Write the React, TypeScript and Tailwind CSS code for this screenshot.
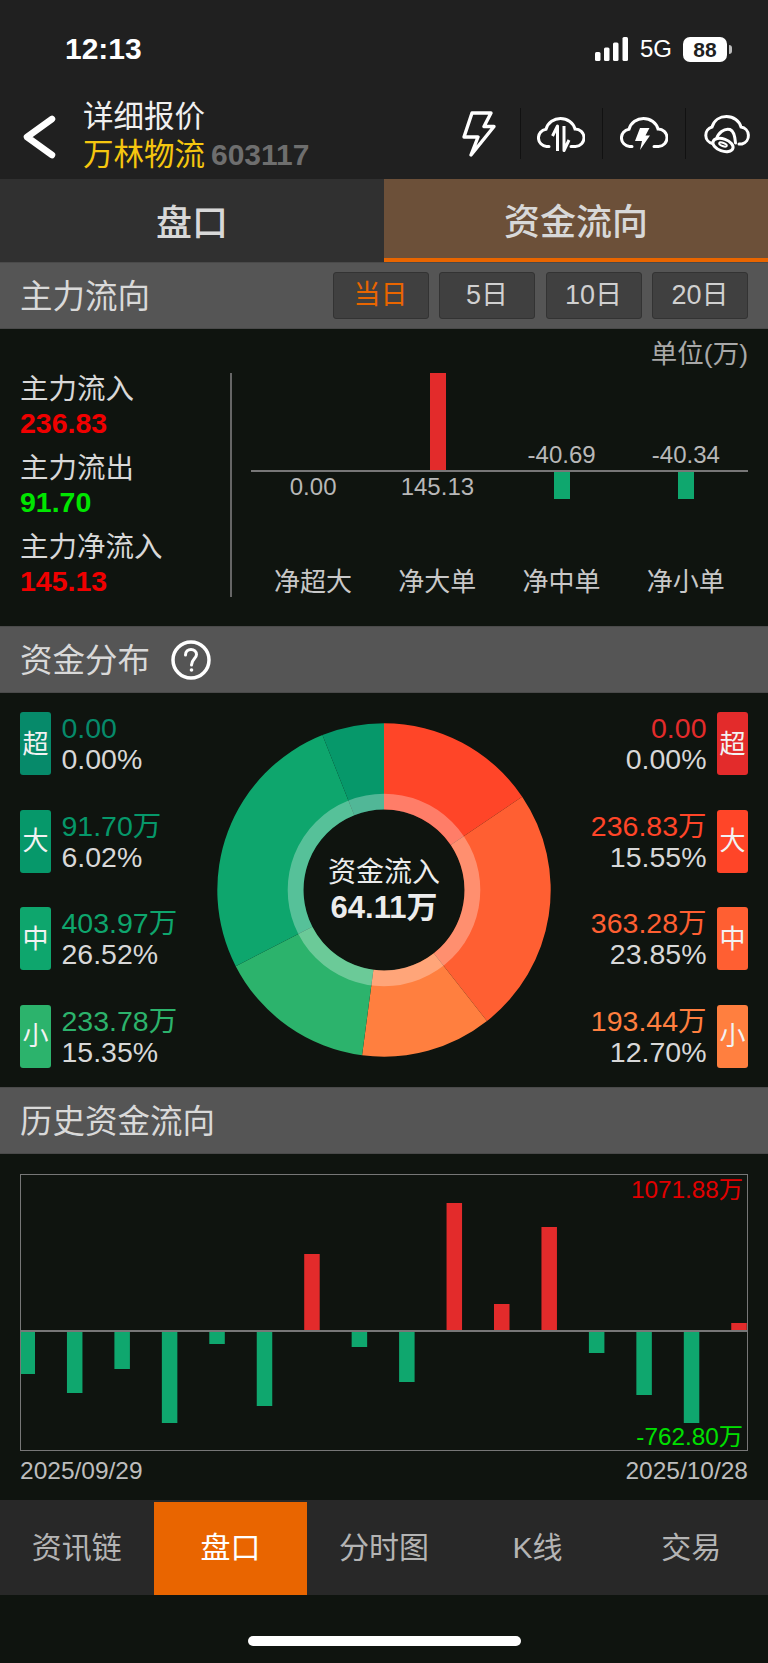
const FONT = "[font-family:'Liberation_Sans','Noto_Sans_CJK_SC',sans-serif]";

/* ── Status bar glyphs ── */
function SignalIcon() {
  return (
    <svg width="34" height="24" viewBox="0 0 34 24" fill="white">
      <rect x="0" y="15" width="5.5" height="9" rx="1.5" />
      <rect x="9" y="10.5" width="5.5" height="13.5" rx="1.5" />
      <rect x="18" y="5.5" width="5.5" height="18.5" rx="1.5" />
      <rect x="27.5" y="0" width="5.5" height="24" rx="1.5" />
    </svg>
  );
}

function StatusBar() {
  return (
    <div className="flex h-[92px] items-start justify-between pt-[30px] pl-[65px] pr-[36px]">
      <span className="text-[30px] leading-[38px] font-semibold text-white">12:13</span>
      <div className="flex items-center pt-[6px]">
        <SignalIcon />
        <span className="ml-[11px] text-[24px] leading-[26px] text-white">5G</span>
        <span className="ml-[11px] flex h-[25px] w-[44px] items-center justify-center rounded-[7px] bg-white text-[21px] leading-none font-bold text-[#202020]">
          88
        </span>
        <span className="ml-[2px] h-[9px] w-[3px] rounded-r-full bg-white/70" />
      </div>
    </div>
  );
}

/* ── Toolbar icons ── */
const CLOUD = "M12 29.5H9.5A8.7 8.7 0 0 1 9 12.2C11 5.5 17 1.5 23.5 1.5C30.5 1.5 36.5 6 38 12A8.7 8.7 0 0 1 38.5 29.5H34";

function BoltIcon() {
  return (
    <svg width="34" height="46" viewBox="0 0 34 46" fill="none" stroke="white" strokeWidth="3.4" strokeLinejoin="round">
      <path d="M10 2H29L22 15.5H32L9 44L16 26H2Z" />
    </svg>
  );
}

function CloudSwapIcon() {
  return (
    <svg className="mt-[3px]" width="48" height="36" viewBox="0 0 48 36" fill="none" stroke="white" strokeWidth="3">
      <path d={CLOUD} strokeLinecap="round" />
      <path d="M20.5 34V9L15.5 19" strokeLinejoin="round" />
      <path d="M27 9V33.5L32 23" strokeLinejoin="round" />
    </svg>
  );
}

function CloudBoltIcon() {
  return (
    <svg className="mt-[3px]" width="48" height="36" viewBox="0 0 48 36" fill="none" stroke="white" strokeWidth="3">
      <path d={CLOUD} strokeLinecap="round" />
      <path d="M20 11H29.5L25.5 18.5H30L20 33L22 24H15Z" fill="white" stroke="none" />
    </svg>
  );
}

function CloudBellIcon() {
  return (
    <svg className="mt-[5px]" width="48" height="42" viewBox="0 0 48 42" fill="none" stroke="white" strokeWidth="3">
      <path d="M9.5 28.5A8.5 8.5 0 0 1 9 12C11 5 17 1.5 23.5 1.5C30.5 1.5 36.5 6 38 12A8.7 8.7 0 0 1 39 29H36" strokeLinecap="round" />
      <path d="M13.5 24C15 18 21 13 27 14.5C31 16 32 21 32.5 28" fill="#202020" strokeLinecap="round" />
      <ellipse cx="20" cy="30" rx="10.5" ry="6" transform="rotate(20 20 30)" fill="#202020" />
      <ellipse cx="20" cy="29.5" rx="4" ry="1.6" transform="rotate(20 20 29.5)" strokeWidth="2" />
    </svg>
  );
}

function ToolSlot({ children, divider = true }: { children: React.ReactNode; divider?: boolean }) {
  return (
    <div className={`flex h-[51px] w-[82.5px] items-center justify-center ${divider ? "border-r border-[#111]" : ""}`}>
      {children}
    </div>
  );
}

function NavBar() {
  return (
    <div className="flex h-[87px] items-start">
      <svg className="mt-[22px] ml-[22px]" width="36" height="46" viewBox="0 0 36 46" fill="none" stroke="white" strokeWidth="6.5" strokeLinecap="round" strokeLinejoin="round">
        <path d="M30 5L5 23L30 41" />
      </svg>
      <div className="mt-[5px] ml-[25px] flex flex-col">
        <span className="text-[30.5px] leading-[38px] text-[#f0f0f0]">详细报价</span>
        <span className="text-[30.5px] leading-[38px] text-[#f5c60f]">
          万林物流
          <span className="ml-[6px] text-[30px] font-bold text-[#6e6e6e]">603117</span>
        </span>
      </div>
      <div className="mt-[16px] ml-auto flex items-center">
        <ToolSlot><BoltIcon /></ToolSlot>
        <ToolSlot><CloudSwapIcon /></ToolSlot>
        <ToolSlot><CloudBoltIcon /></ToolSlot>
        <ToolSlot divider={false}><CloudBellIcon /></ToolSlot>
      </div>
    </div>
  );
}

/* ── Section header strip ── */
function SectionHeader({ title, children }: { title: string; children?: React.ReactNode }) {
  return (
    <div className="flex h-[67px] shrink-0 items-center border-y border-[#4a4a4a] bg-[#555555] pl-[20px] pr-[20px]">
      <span className="pt-[3px] text-[32.5px] leading-none text-[#d9d9d9]">{title}</span>
      {children}
    </div>
  );
}

/* ── Main-force flow ── */
const RANGES = ["当日", "5日", "10日", "20日"];

const FLOW_TOTALS = [
  { label: "主力流入", value: "236.83", color: "text-[#f00000]" },
  { label: "主力流出", value: "91.70", color: "text-[#00e600]" },
  { label: "主力净流入", value: "145.13", color: "text-[#f00000]" },
];

const NET_ORDERS = [
  { label: "净超大", value: "0.00", bar: 0 },
  { label: "净大单", value: "145.13", bar: 97 },
  { label: "净中单", value: "-40.69", bar: -27 },
  { label: "净小单", value: "-40.34", bar: -27 },
];

function MainFlow() {
  return (
    <div className="h-[297px] shrink-0 pr-[20px]">
      <div className="h-[44px] pt-[8px] text-right text-[26.5px] leading-[34px] text-[#a8a8a8]">单位(万)</div>
      <div className="flex h-[224px]">
        <div className="flex w-[232px] flex-col gap-[12px] border-r-2 border-[#666] pl-[20px]">
          {FLOW_TOTALS.map((row) => (
            <div key={row.label} className="text-[28.5px] leading-[33.5px]">
              <div className="text-[#d8d8d8]">{row.label}</div>
              <div className={`font-bold ${row.color}`}>{row.value}</div>
            </div>
          ))}
        </div>
        <div className="ml-[19px] flex flex-1 flex-col">
          <div className="grid h-[97px] grid-cols-4">
            {NET_ORDERS.map((o) => (
              <div key={o.label} className="flex flex-col items-center justify-end">
                {o.bar > 0 && <div className="ml-[1px] w-[16px] bg-[#e32b2b]" style={{ height: o.bar }} />}
                {o.bar < 0 && <span className="text-[24px] leading-[30px] text-[#b8b8b8]">{o.value}</span>}
              </div>
            ))}
          </div>
          <div className="h-[2px] bg-[#777]" />
          <div className="grid flex-1 grid-cols-4">
            {NET_ORDERS.map((o) => (
              <div key={o.label} className="flex flex-col items-center">
                {o.bar < 0 ? (
                  <div className="w-[16px] bg-[#0fa76e]" style={{ height: -o.bar }} />
                ) : (
                  <span className="text-[24px] leading-[30px] text-[#b8b8b8]">{o.value}</span>
                )}
              </div>
            ))}
          </div>
          <div className="grid h-[34px] grid-cols-4 pt-[2px]">
            {NET_ORDERS.map((o) => (
              <div key={o.label} className="text-center text-[26px] leading-[34px] text-[#c8c8c8]">{o.label}</div>
            ))}
          </div>
        </div>
      </div>
    </div>
  );
}

/* ── Capital distribution ── */
const OUTFLOW = [
  { tag: "超", value: "0.00", pct: "0.00%", bg: "bg-[#068a6a]", fg: "text-[#068a6a]" },
  { tag: "大", value: "91.70万", pct: "6.02%", bg: "bg-[#06986a]", fg: "text-[#06986a]" },
  { tag: "中", value: "403.97万", pct: "26.52%", bg: "bg-[#0ea66d]", fg: "text-[#0ea66d]" },
  { tag: "小", value: "233.78万", pct: "15.35%", bg: "bg-[#2cb36c]", fg: "text-[#2cb36c]" },
];

const INFLOW = [
  { tag: "超", value: "0.00", pct: "0.00%", bg: "bg-[#e32b2b]", fg: "text-[#e32b2b]" },
  { tag: "大", value: "236.83万", pct: "15.55%", bg: "bg-[#ff4528]", fg: "text-[#ff4528]" },
  { tag: "中", value: "363.28万", pct: "23.85%", bg: "bg-[#ff5f32]", fg: "text-[#ff5f32]" },
  { tag: "小", value: "193.44万", pct: "12.70%", bg: "bg-[#ff7f3f]", fg: "text-[#ff7f3f]" },
];

// clockwise from twelve o'clock, in percent of the whole
const SLICES = [
  { pct: 15.55, fill: "#ff4528" },
  { pct: 23.85, fill: "#ff5f32" },
  { pct: 12.7, fill: "#ff7f3f" },
  { pct: 15.35, fill: "#2cb36c" },
  { pct: 26.53, fill: "#0ea66d" },
  { pct: 6.02, fill: "#06986a" },
];

function slicePath(from: number, to: number, r1: number, r0: number) {
  const pt = (pct: number, r: number) => {
    const a = (pct / 100) * 2 * Math.PI;
    return `${(167 + r * Math.sin(a)).toFixed(2)} ${(167 - r * Math.cos(a)).toFixed(2)}`;
  };
  const large = to - from > 50 ? 1 : 0;
  return `M${pt(from, r1)}A${r1} ${r1} 0 ${large} 1 ${pt(to, r1)}L${pt(to, r0)}A${r0} ${r0} 0 ${large} 0 ${pt(from, r0)}Z`;
}

function Donut() {
  let start = 0;
  return (
    <div className="relative h-[334px] w-[334px]">
      <svg width="334" height="334" viewBox="0 0 334 334">
        {SLICES.map((s) => {
          const d = slicePath(start, start + s.pct, 166.7, 80.5);
          start += s.pct;
          return <path key={s.fill} d={d} fill={s.fill} />;
        })}
        <circle cx="167" cy="167" r="88.4" fill="none" stroke="white" strokeOpacity="0.3" strokeWidth="15.8" />
      </svg>
      <div className="absolute inset-0 flex flex-col items-center justify-center text-[28px] leading-[35px] text-[#ececec]">
        <span>资金流入</span>
        <span className="text-[31px] font-bold">64.11万</span>
      </div>
    </div>
  );
}

type LegendRow = (typeof OUTFLOW)[number];

function Legend({ rows, side }: { rows: LegendRow[]; side: "left" | "right" }) {
  return (
    <div className="flex flex-col gap-[34.5px] pt-[19px]">
      {rows.map((r) => (
        <div key={r.tag} className={`flex h-[63px] gap-[10.5px] ${side === "right" ? "flex-row-reverse text-right" : ""}`}>
          <div className={`flex h-[63px] w-[31px] items-center justify-center rounded-[3px] text-[26px] leading-none text-[#f2f2f2] ${r.bg}`}>
            {r.tag}
          </div>
          <div className="pt-[1px] text-[28.5px] leading-[31px]">
            <div className={r.fg}>{r.value}</div>
            <div className="text-[#d8d8d8]">{r.pct}</div>
          </div>
        </div>
      ))}
    </div>
  );
}

function Distribution() {
  return (
    <div className="flex h-[394px] shrink-0 justify-between px-[20px]">
      <Legend rows={OUTFLOW} side="left" />
      <div className="absolute left-[217px] mt-[30px]">
        <Donut />
      </div>
      <Legend rows={INFLOW} side="right" />
    </div>
  );
}

/* ── History chart ── */
// net flow per session, as plotted bar height; positive is above the axis
const HISTORY = [-43, -62, -38, -92, -13, -75, 77, -16, -51, 128, 27, 104, -22, -64, -92, 8];
const AXIS_Y = 156;

function History() {
  return (
    <div className="flex h-[346px] shrink-0 flex-col px-[20px] pt-[20px]">
      <div className="relative h-[277px] border border-[#777]">
        <svg className="block" width="726" height="275" viewBox="0 0 726 275">
          {HISTORY.map((v, i) => {
            const x = Math.max(-1.5 + 47.45 * i, 0);
            const w = i === 0 ? 14 : 15.5;
            return v > 0 ? (
              <rect key={i} x={x} y={AXIS_Y - v} width={w} height={v} fill="#e32b2b" />
            ) : (
              <rect key={i} x={x} y={AXIS_Y} width={w} height={-v} fill="#0fa76e" />
            );
          })}
          <rect x="0" y={AXIS_Y - 1} width="726" height="2" fill="#777" />
        </svg>
        <span className="absolute top-[1px] right-[4px] text-[24.3px] leading-[28px] text-[#e00000]">1071.88万</span>
        <span className="absolute right-[4px] bottom-[-1px] text-[24.3px] leading-[28px] text-[#00e000]">-762.80万</span>
      </div>
      <div className="mt-[3px] flex justify-between text-[24.5px] leading-[34px] text-[#bdbdbd]">
        <span>2025/09/29</span>
        <span>2025/10/28</span>
      </div>
    </div>
  );
}

/* ── Bottom tabs ── */
const BOTTOM_TABS = ["资讯链", "盘口", "分时图", "K线", "交易"];

function BottomTabs() {
  return (
    <div className="grid h-[95px] shrink-0 grid-cols-5 bg-[#282828] pt-[2px]">
      {BOTTOM_TABS.map((t) => (
        <div
          key={t}
          className={`flex items-center justify-center pb-[2px] text-[30px] leading-none ${
            t === "盘口" ? "bg-[#e96500] text-white" : "text-[#b4b4b4]"
          }`}
        >
          {t}
        </div>
      ))}
    </div>
  );
}

export default function App() {
  return (
    <div className={`relative flex h-[1663px] w-[768px] flex-col overflow-hidden bg-[#0f140f] ${FONT}`}>
      <div className="h-[179px] shrink-0 bg-[#202020]">
        <StatusBar />
        <NavBar />
      </div>

      <div className="grid h-[83px] shrink-0 grid-cols-2 text-[36px] leading-none font-medium text-[#d8d8d8]">
        <div className="flex items-center justify-center bg-[#303030] pt-[6px]">盘口</div>
        <div className="flex items-center justify-center border-b-4 border-[#e96500] bg-[#6c5039] pt-[8px]">资金流向</div>
      </div>

      <SectionHeader title="主力流向">
        <div className="ml-auto flex gap-[10.5px]">
          {RANGES.map((r, i) => (
            <div
              key={r}
              className={`flex h-[47px] w-[96px] items-center justify-center rounded-[3px] border border-[#333] bg-[#404040] text-[27px] leading-none ${
                i === 0 ? "text-[#e96500]" : "text-[#d0d0d0]"
              }`}
            >
              {r}
            </div>
          ))}
        </div>
      </SectionHeader>
      <MainFlow />

      <SectionHeader title="资金分布">
        <svg className="ml-[21px]" width="40" height="40" viewBox="0 0 40 40" fill="none" stroke="white" strokeWidth="3.5">
          <circle cx="20" cy="20" r="18" />
          <path d="M14.5 15C14.5 11.5 17 9.5 20 9.5C23 9.5 25.5 11.5 25.5 14.5C25.5 18.5 20.5 19.5 20.5 25" strokeWidth="3" strokeLinecap="round" />
          <circle cx="20.5" cy="30" r="1.8" fill="white" stroke="none" />
        </svg>
      </SectionHeader>
      <Distribution />

      <SectionHeader title="历史资金流向" />
      <History />

      <BottomTabs />

      <div className="flex flex-1 justify-center pt-[41px]">
        <div className="h-[10px] w-[273px] rounded-full bg-white" />
      </div>
    </div>
  );
}
